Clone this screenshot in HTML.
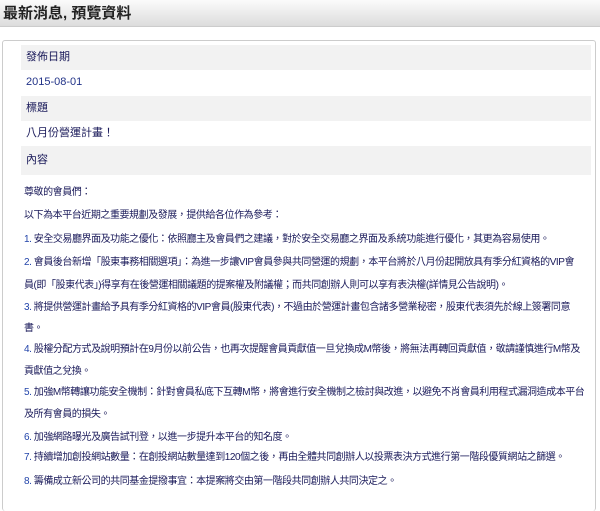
<!DOCTYPE html>
<html><head><meta charset="utf-8"><style>
body{margin:0;width:600px;height:496px;overflow:hidden;background:#fff;font-family:"Liberation Sans","Noto Sans CJK TC",sans-serif;}
.hd{height:26px;background:linear-gradient(#fbfbfb,#dcdcdc);border-bottom:1px solid #ccc;font-size:15px;font-weight:bold;color:#222;line-height:28px;padding-left:3px;}
.panel{position:absolute;left:2px;top:40px;width:592px;height:470px;border:1px solid #ccc;border-radius:3px;border-bottom:none}
.row{position:absolute;left:21px;width:570px;height:25px;font-size:11px;color:#1a1a5a;line-height:25px;padding-left:5px;box-sizing:border-box}
.g{background:#f2f2f2}
.c{position:absolute;left:24px;font-size:10px;letter-spacing:-0.45px;color:#1a1a5a;white-space:nowrap}
.c b{font-weight:normal;color:#2244aa}
</style></head><body>
<div class="hd">最新消息, 預覽資料</div>
<div class="panel"></div>
<div class="row g" style="top:45px">發佈日期</div>
<div class="row" style="top:70px;color:#223388">2015-08-01</div>
<div class="row g" style="top:96px">標題</div>
<div class="row" style="top:121px">八月份營運計畫！</div>
<div class="row g" style="top:146px;height:29px;line-height:29px">內容</div>
<div class="c" style="top:183px">尊敬的會員們：</div>
<div class="c" style="top:206px">以下為本平台近期之重要規劃及發展，提供給各位作為參考：</div>
<div class="c" style="top:230px"><b>1.</b> 安全交易廳界面及功能之優化：依照廳主及會員們之建議，對於安全交易廳之界面及系統功能進行優化，其更為容易使用。</div>
<div class="c" style="top:253px"><b>2.</b> 會員後台新增「股東事務相關選項」：為進一步讓VIP會員參與共同營運的規劃，本平台將於八月份起開放具有季分紅資格的VIP會</div>
<div class="c" style="top:276px">員(即「股東代表」)得享有在後營運相關議題的提案權及附議權；而共同創辦人則可以享有表決權(詳情見公告說明)。</div>
<div class="c" style="top:298px"><b>3.</b> 將提供營運計畫給予具有季分紅資格的VIP會員(股東代表)，不過由於營運計畫包含諸多營業秘密，股東代表須先於線上簽署同意</div>
<div class="c" style="top:319px">書。</div>
<div class="c" style="top:340px"><b>4.</b> 股權分配方式及說明預計在9月份以前公告，也再次提醒會員貢獻值一旦兌換成M幣後，將無法再轉回貢獻值，敬請謹慎進行M幣及</div>
<div class="c" style="top:362px">貢獻值之兌換。</div>
<div class="c" style="top:383px"><b>5.</b> 加強M幣轉讓功能安全機制：針對會員私底下互轉M幣，將會進行安全機制之檢討與改進，以避免不肖會員利用程式漏洞造成本平台</div>
<div class="c" style="top:405px">及所有會員的損失。</div>
<div class="c" style="top:428px"><b>6.</b> 加強網路曝光及廣告試刊登，以進一步提升本平台的知名度。</div>
<div class="c" style="top:448px"><b>7.</b> 持續增加創投網站數量：在創投網站數量達到120個之後，再由全體共同創辦人以投票表決方式進行第一階段優質網站之篩選。</div>
<div class="c" style="top:472px"><b>8.</b> 籌備成立新公司的共同基金提撥事宜：本提案將交由第一階段共同創辦人共同決定之。</div>
</body></html>
